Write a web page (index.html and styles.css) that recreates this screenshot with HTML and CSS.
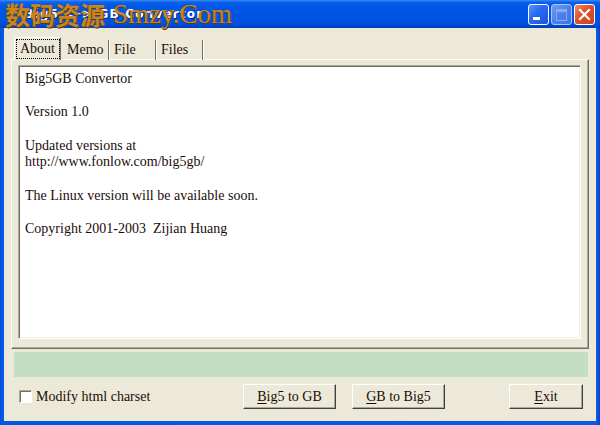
FILE: index.html
```html
<!DOCTYPE html>
<html>
<head>
<meta charset="utf-8">
<link rel="stylesheet" href="styles.css">
</head>
<body>
<div class="window">
  <div class="titlebar">
    <span class="title">Big5 &lt;-&gt; GB Convertor</span>
    <div class="controls">
      <span class="ctl ctl-min"><span class="min-bar"></span></span>
      <span class="ctl ctl-max"><span class="max-box"></span></span>
      <span class="ctl ctl-close">
        <svg width="13" height="13" viewBox="0 0 13 13"><path d="M2 2 L11 11 M11 2 L2 11" stroke="#fff" stroke-width="2.2" stroke-linecap="square"/></svg>
      </span>
    </div>
    <div class="watermark"><span class="wm-cn">数码资源</span><span class="wm-en">Smzy.Com</span></div>
  </div>
  <div class="client">
    <div class="tabs">
      <div class="tab tab-active"><span class="focus">About</span></div>
      <div class="tab">Memo</div>
      <div class="tab">File</div>
      <div class="tab">Files</div>
    </div>
    <div class="panel">
      <div class="textbox">
        <p>Big5GB Convertor</p>
        <p>Version 1.0</p>
        <p>Updated versions at<br>http://www.fonlow.com/big5gb/</p>
        <p>The Linux version will be available soon.</p>
        <p>Copyright 2001-2003&nbsp; Zijian Huang</p>
      </div>
    </div>
    <div class="status"></div>
    <div class="bottom">
      <label class="check"><span class="box"></span>Modify html charset</label>
      <button class="btn btn-b2g"><u>B</u>ig5 to GB</button>
      <button class="btn btn-g2b"><u>G</u>B to Big5</button>
      <button class="btn btn-exit"><u>E</u>xit</button>
    </div>
  </div>
</div>
</body>
</html>
```
FILE: styles.css
```css
html, body {
  margin: 0;
  padding: 0;
  background: #0054e3;
}
.window {
  width: 600px;
  height: 425px;
  display: flex;
  flex-direction: column;
  background: linear-gradient(to right, #0a3fc8 0, #0a5ae6 1px, #0058e4 3px, #0a5ae6 597px, #0a3fc8 600px);
  overflow: hidden;
}
.titlebar {
  position: relative;
  height: 28px;
  flex: none;
  background: linear-gradient(to bottom, #3c8ef8 0, #0c62ea 2px, #0057e6 6px, #0054e3 55%, #0050dc 85%, #003db8 100%);
  display: flex;
  align-items: center;
}
.title {
  margin-left: 24px;
  color: #fff;
  font: bold 12px "DejaVu Sans", sans-serif;
  letter-spacing: 1.2px;
  text-shadow: 1px 1px 0 #0a2a80;
}
.controls {
  position: absolute;
  right: 5px;
  top: 4px;
  display: flex;
  gap: 2px;
}
.ctl {
  width: 19px;
  height: 19px;
  border: 1px solid #fff;
  border-radius: 3px;
  display: flex;
  align-items: center;
  justify-content: center;
  position: relative;
}
.ctl-min {
  background: linear-gradient(135deg, #5a96ff 0, #2a6af2 40%, #1a55e0 100%);
}
.min-bar {
  position: absolute;
  left: 4px;
  bottom: 4px;
  width: 7px;
  height: 3px;
  background: #fff;
}
.ctl-max {
  background: linear-gradient(135deg, #6f9df5 0, #4a80ee 50%, #3d72e4 100%);
  border-color: #a9c4f7;
}
.max-box {
  width: 9px;
  height: 8px;
  border: 1px solid #86a9ef;
  border-top-width: 3px;
}
.ctl-close {
  background: linear-gradient(135deg, #f0906c 0, #e0542c 40%, #cc3f1b 100%);
}
.watermark {
  position: absolute;
  left: 5px;
  top: 0;
  height: 28px;
  display: flex;
  align-items: center;
  white-space: nowrap;
}
.wm-cn {
  font: bold 25px "Noto Sans CJK SC", sans-serif;
  color: #c98520;
  text-shadow: 1px 1px 0 #5e3a0c;
  line-height: 28px;
}
.wm-en {
  margin-left: 8px;
  font: 27px "Liberation Serif", serif;
  color: #c98520;
  text-shadow: 1px 1px 0 #5e3a0c;
  line-height: 28px;
}
.client {
  flex: 1;
  margin: 0 4px 4px 4px;
  background: #ece9d8;
  display: flex;
  flex-direction: column;
  font: 14px "Liberation Serif", serif;
  color: #1a0c08;
}
.tabs {
  display: flex;
  padding: 9px 0 0 10px;
  height: 23px;
  position: relative;
  z-index: 1;
}
.tab {
  width: 41px;
  padding-left: 5px;
  height: 20px;
  margin-top: 3px;
  line-height: 19px;
  border-right: 1px solid #716f64;
  box-shadow: 1px 0 0 #fff;
}
.tab-active {
  width: 47px;
  padding: 1px 0 0 0;
  margin-top: 0;
  margin-right: 1px;
  height: 23px;
  background: #ece9d8;
  border-top: 1px solid #fff;
  border-left: 1px solid #fff;
  border-right: 1px solid #716f64;
  box-shadow: inset -1px 0 0 #aca899;
  display: flex;
  justify-content: center;
  box-sizing: border-box;
}
.focus {
  border: 1px dotted #000;
  padding: 0 2px;
  height: 18px;
  line-height: 17px;
  width: 38px;
  text-align: center;
}
.panel {
  margin: -1px 7px 0 7px;
  height: 290px;
  box-sizing: border-box;
  border: 1px solid;
  border-color: #fff #716f64 #716f64 #fff;
  box-shadow: inset -1px -1px 0 #aca899;
  padding: 5px 7px 9px 6px;
  display: flex;
}
.textbox {
  flex: 1;
  background: #fff;
  border: 1px solid;
  border-color: #aca899 #fff #fff #aca899;
  box-shadow: inset 1px 1px 0 #716f64, inset -1px -1px 0 #f1efe2;
  padding: 5px 6px;
  line-height: 16.7px;
}
.textbox p {
  margin: 0 0 16.7px 0;
}
.status {
  margin: 3px 8px 0 10px;
  height: 25px;
  background: #c3dec3;
}
.bottom {
  display: flex;
  align-items: center;
  margin-top: 7px;
  padding: 0 13px 0 15px;
  height: 25px;
}
.check {
  display: flex;
  align-items: center;
  flex: 1;
}
.box {
  width: 11px;
  height: 11px;
  background: #fff;
  border: 1px solid;
  border-color: #aca899 #fff #fff #aca899;
  box-shadow: inset 1px 1px 0 #716f64;
  margin-right: 4px;
}
.btn {
  font: 14px "Liberation Serif", serif;
  color: #1a0c08;
  background: #ece9d8;
  height: 25px;
  border: 1px solid;
  border-color: #fff #404040 #404040 #fff;
  box-shadow: inset -1px -1px 0 #aca899;
  padding: 0;
}
.btn u {
  text-decoration-thickness: 1px;
  text-underline-offset: 2px;
}
.btn-b2g {
  width: 93px;
}
.btn-g2b {
  width: 93px;
  margin-left: 16px;
}
.btn-exit {
  width: 74px;
  margin-left: 64px;
}
```
